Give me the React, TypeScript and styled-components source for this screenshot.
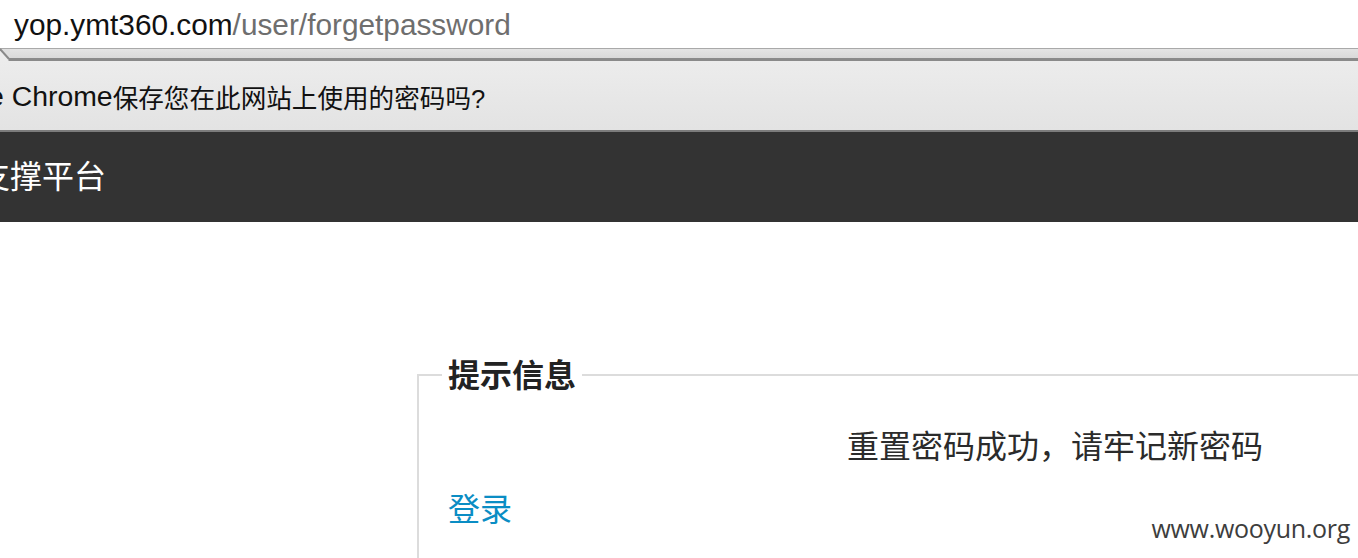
import React from "react";
import styled, { createGlobalStyle } from "styled-components";

const GlobalStyle = createGlobalStyle`
  html, body {
    margin: 0;
    padding: 0;
    overflow: hidden;
    background: #fff;
  }
  body {
    font-family: "Liberation Sans", "Noto Sans CJK SC", sans-serif;
    width: 1358px;
    height: 558px;
  }
`;

const Page = styled.div`
  position: relative;
  width: 1358px;
  height: 558px;
  overflow: hidden;
`;

const AddressBar = styled.div`
  height: 48px;
  line-height: 50px;
  padding-left: 14px;
  font-size: 29.8px;
  color: #111;
  white-space: nowrap;
  background: #fff;
`;

const Path = styled.span`
  color: #6e6e6e;
`;

const Strip = styled.div`
  display: flex;
  height: 13px;
`;

const StripBody = styled.div`
  flex: 1;
  background: linear-gradient(#e4e4e4, #d9d9d9);
  border-top: 1px solid #a9a9a9;
  border-bottom: 3px solid #8a8a8a;
`;

const InfoBar = styled.div`
  height: 71px;
  display: flex;
  align-items: center;
  padding-top: 2px;
  box-sizing: border-box;
  background: linear-gradient(#ececec, #e3e3e3);
  border-bottom: 2px solid #7c7c7c;
  white-space: nowrap;
  color: #111;
`;

const InfoText = styled.span<{ $latin?: boolean }>`
  font-size: ${({ $latin }) => ($latin ? "28.4px" : "25.6px")};
  margin-left: ${({ $latin }) => ($latin ? "-12px" : "0")};
`;

const Header = styled.div`
  height: 90px;
  background: #333;
  display: flex;
  align-items: center;
  overflow: hidden;
`;

const Brand = styled.div`
  margin-left: -22px;
  padding-bottom: 6px;
  font-size: 32px;
  color: #fff;
  font-family: "Noto Sans CJK SC", sans-serif;
  white-space: nowrap;
`;

const Main = styled.div`
  padding-top: 133px;
`;

const Notice = styled.fieldset`
  box-sizing: border-box;
  width: 1276px;
  height: 260px;
  margin: 0 0 0 417px;
  padding: 0 23px;
  border: 2px solid #dcdcdc;
  min-inline-size: auto;
`;

const NoticeTitle = styled.legend`
  padding: 0 6px 4px;
  font-size: 32px;
  line-height: 36px;
  font-weight: bold;
  color: #222;
  font-family: "Noto Sans CJK SC", sans-serif;
`;

const Message = styled.p`
  margin: 29px 0 0;
  text-align: center;
  font-size: 32px;
  line-height: 40px;
  color: #2b2b2b;
  font-family: "Noto Sans CJK SC", sans-serif;
`;

const LoginLink = styled.a`
  display: inline-block;
  margin: 23px 0 0 6px;
  font-size: 32px;
  line-height: 40px;
  color: #0a8dc4;
  text-decoration: none;
  font-family: "Noto Sans CJK SC", sans-serif;
`;

const Watermark = styled.div`
  position: absolute;
  right: 8px;
  top: 512px;
  font-size: 25px;
  line-height: 32px;
  color: #3d3d3d;
  font-family: "Open Sans", "Liberation Sans", sans-serif;
  letter-spacing: -0.3px;
`;

const Notch = () => (
  <svg width="10" height="13" viewBox="0 0 10 13" style={{ display: "block" }}>
    <rect x="0" y="0" width="10" height="13" fill="#ececec" />
    <polygon points="0,1 10,1 10,10 9,10" fill="#dedede" />
    <line x1="0" y1="0.5" x2="10" y2="0.5" stroke="#a9a9a9" />
    <line x1="0" y1="1" x2="9" y2="11" stroke="#8a8a8a" strokeWidth="2" />
    <rect x="8.5" y="10" width="1.5" height="3" fill="#8a8a8a" />
  </svg>
);

export default function App() {
  return (
    <Page>
      <GlobalStyle />
      <AddressBar>
        yop.ymt360.com<Path>/user/forgetpassword</Path>
      </AddressBar>
      <Strip>
        <Notch />
        <StripBody />
      </Strip>
      <InfoBar>
        <InfoText $latin>e Chrome</InfoText>
        <InfoText>保存您在此网站上使用的密码吗?</InfoText>
      </InfoBar>
      <Header>
        <Brand>支撑平台</Brand>
      </Header>
      <Main>
        <Notice>
          <NoticeTitle>提示信息</NoticeTitle>
          <Message>重置密码成功，请牢记新密码</Message>
          <LoginLink href="#">登录</LoginLink>
        </Notice>
      </Main>
      <Watermark>www.wooyun.org</Watermark>
    </Page>
  );
}
